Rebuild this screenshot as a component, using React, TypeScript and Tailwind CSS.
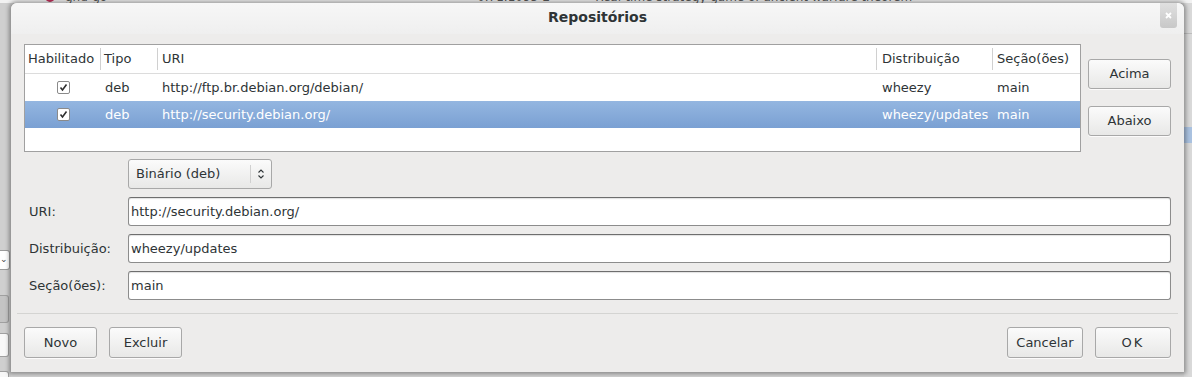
const font = { fontFamily: '"DejaVu Sans", "Liberation Sans", sans-serif' };

function Check() {
  return (
    <span className="flex h-[13px] w-[13px] items-center justify-center rounded-[2px] border border-[#8a8a8a] bg-white">
      <svg width="9" height="9" viewBox="0 0 9 9">
        <path d="M1.5 4.5 L3.5 7 L7.5 1.5" fill="none" stroke="#2e2e2e" strokeWidth="1.6" />
      </svg>
    </span>
  );
}

function Btn({ label, className = "" }: { label: string; className?: string }) {
  return (
    <button
      className={
        "flex items-center justify-center rounded-[3px] border border-[#a8a8a8] bg-gradient-to-b from-[#fbfbfb] to-[#e8e8e7] text-[13px] text-[#2e3436] shadow-[0_1px_0_rgba(255,255,255,0.8)] " +
        className
      }
    >
      {label}
    </button>
  );
}

function Entry({ label, value }: { label: string; value: string }) {
  return (
    <div className="flex items-center">
      <span className="w-[104px] pl-[5px] text-[13px] text-[#2e3436]">{label}</span>
      <div className="flex h-[29px] flex-1 items-center rounded-[3px] border border-[#8c8c8c] border-t-[#6e6e6e] bg-white pl-[2px] text-[13px] text-[#2e3436] shadow-[inset_0_1px_1px_rgba(0,0,0,0.12)]">
        {value}
      </div>
    </div>
  );
}

const rows = [
  { type: "deb", uri: "http://ftp.br.debian.org/debian/", dist: "wheezy", sec: "main", sel: false },
  { type: "deb", uri: "http://security.debian.org/", dist: "wheezy/updates", sec: "main", sel: true },
];

export default function App() {
  return (
    <div className="relative h-[377px] w-[1192px] overflow-hidden bg-[#d4d4d4]" style={font}>
      {/* window behind the dialog: only its edges show */}
      <div className="h-[3px] overflow-hidden bg-[#f2f2f2]">
        <div className="mt-[-10px] flex items-center text-[12px] leading-[14px] text-[#555]">
          <span className="ml-[45px] h-[10px] w-[10px] rounded-full border-2 border-[#c0305a]" />
          <span className="ml-[10px]">gnu-go</span>
          <span className="ml-[370px]">0.71.1095-2</span>
          <span className="ml-[45px]">Real-time strategy game of ancient warfare theorem</span>
        </div>
      </div>
      <div className="absolute left-0 top-[3px] h-[374px] w-[11px] bg-[#cfcfcf]">
        <div className="absolute left-0 top-[247px] h-[20px] w-[10px] rounded-r-[3px] border border-l-0 border-[#9a9a9a] bg-white text-[9px] leading-[16px] text-[#444]">⌄</div>
        <div className="absolute left-0 top-[292px] h-[28px] w-[9px] rounded-r-[3px] border border-l-0 border-[#a0a0a0] bg-[#c4c4c4]" />
        <div className="absolute left-0 top-[330px] h-[24px] w-[9px] rounded-r-[3px] border border-l-0 border-[#a0a0a0] bg-[#f8f8f8]" />
        <div className="absolute left-0 top-[368px] h-[20px] w-[9px] rounded-r-[3px] border border-l-0 border-[#a0a0a0] bg-[#f8f8f8]" />
      </div>
      <div className="absolute right-0 top-[3px] h-[374px] w-[8px] bg-[#d9d9d9]">
        <div className="absolute left-0 top-[30px] h-px w-[8px] bg-[#bdbdbd]" />
        <div className="absolute left-0 top-[124px] h-[16px] w-[8px] bg-[#aac2e0]" />
      </div>

      {/* dialog */}
      <div className="absolute left-[11px] top-[3px] flex h-[369px] w-[1173px] flex-col rounded-t-[6px] bg-[#edeceb] shadow-[0_0_4px_2px_rgba(0,0,0,0.35)]">
        <div className="relative flex h-[31px] items-center justify-center rounded-t-[6px] bg-gradient-to-b from-[#f7f7f7] to-[#efefef]">
          <span className="mt-[-2px] text-[14px] font-bold text-[#2e3436]">Repositórios</span>
          <div className="absolute right-[7px] top-0 flex h-[25px] w-[17px] items-center justify-center rounded-b-[3px] bg-gradient-to-b from-[#e0e0e0] to-[#c8c8c8]">
            <svg width="7" height="7" viewBox="0 0 7 7">
              <path d="M1 1 L6 6 M6 1 L1 6" stroke="#fff" strokeWidth="1.8" />
            </svg>
          </div>
        </div>

        <div className="flex flex-1 flex-col px-[13px] pt-[10px]">
          <div className="flex gap-[7px]">
            <div className="flex h-[108px] flex-1 flex-col border border-[#a0a0a0] bg-white text-[13px] text-[#2e3436]">
              <div className="flex h-[29px] items-center border-b border-[#dcdcdc] bg-white">
                <div className="flex h-[22px] w-[76px] items-center border-r border-[#d0d0d0] pl-[3px]">Habilitado</div>
                <div className="flex h-[22px] w-[57px] items-center border-r border-[#d0d0d0] pl-[3px]">Tipo</div>
                <div className="flex h-[22px] w-[719px] items-center border-r border-[#d0d0d0] pl-[4px]">URI</div>
                <div className="flex h-[22px] w-[116px] items-center border-r border-[#d0d0d0] pl-[5px]">Distribuição</div>
                <div className="flex h-[22px] flex-1 items-center pl-[4px]">Seção(ões)</div>
              </div>
              {rows.map((r) => (
                <div
                  key={r.uri}
                  className={
                    "flex h-[27px] items-center " +
                    (r.sel ? "bg-gradient-to-b from-[#94b6e0] to-[#7aa0d3] text-white" : "")
                  }
                >
                  <div className="flex w-[76px] justify-center">
                    <Check />
                  </div>
                  <div className="w-[57px] pl-[4px]">{r.type}</div>
                  <div className="w-[719px] pl-[4px]">{r.uri}</div>
                  <div className="w-[116px] pl-[5px]">{r.dist}</div>
                  <div className="flex-1 pl-[4px]">{r.sec}</div>
                </div>
              ))}
            </div>
            <div className="flex w-[83px] flex-col gap-[17px] pt-[15px]">
              <Btn label="Acima" className="h-[30px]" />
              <Btn label="Abaixo" className="h-[30px]" />
            </div>
          </div>

          <div className="mt-[7px] flex pl-[104px]">
            <div className="flex h-[30px] w-[144px] items-center rounded-[3px] border border-[#a8a8a8] bg-gradient-to-b from-[#fbfbfb] to-[#e8e8e7] text-[13px] text-[#2e3436]">
              <span className="flex-1 pl-[7px]">Binário (deb)</span>
              <span className="h-[18px] w-px bg-[#d0d0d0]" />
              <svg width="20" height="14" viewBox="0 0 20 14">
                <path d="M7.5 5.5 L10 3 L12.5 5.5 M7.5 8.5 L10 11 L12.5 8.5" fill="none" stroke="#2e3436" strokeWidth="1.1" />
              </svg>
            </div>
          </div>

          <div className="mt-[8px] flex flex-col gap-[8px]">
            <Entry label="URI:" value="http://security.debian.org/" />
            <Entry label="Distribuição:" value="wheezy/updates" />
            <Entry label="Seção(ões):" value="main" />
          </div>

          <div className="mx-[-7px] mt-[13px] h-px bg-[#d4d4d2]" />

          <div className="mt-[13px] flex items-center">
            <Btn label="Novo" className="h-[31px] w-[73px]" />
            <Btn label="Excluir" className="ml-[12px] h-[31px] w-[73px]" />
            <div className="flex-1" />
            <Btn label="Cancelar" className="h-[31px] w-[76px]" />
            <Btn label="OK" className="ml-[12px] h-[31px] w-[76px] tracking-[2px]" />
          </div>
        </div>
      </div>
    </div>
  );
}
